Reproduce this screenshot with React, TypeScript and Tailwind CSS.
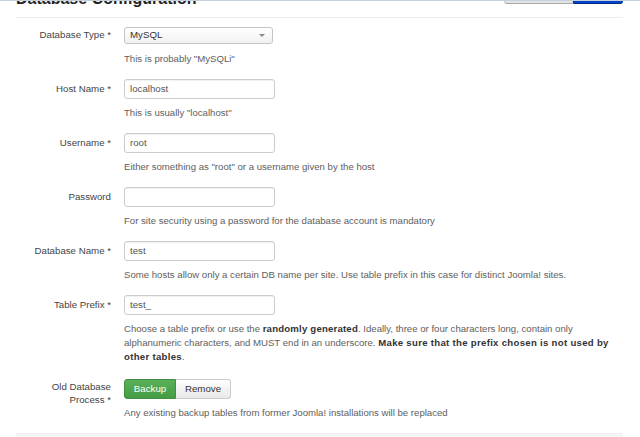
import { ReactNode } from 'react';

type RowProps = {
    label: ReactNode;
    children: ReactNode;
    help: ReactNode;
    twoLineLabel?: boolean;
    className?: string;
};

function FieldRow({ label, children, help, twoLineLabel, className }: RowProps) {
    return (
        <div className={`grid grid-cols-[95px_1fr] gap-x-[13px] mb-[13px] ${className ?? ''}`}>
            <label className={`text-right text-[#444] text-[9.7px] ${twoLineLabel ? 'leading-[13px] pt-[1px]' : 'leading-[20px]'}`}>
                {label}
            </label>
            <div>
                {children}
                <p className="mt-[7px] text-[9.6px] leading-[14px] text-[#606060] whitespace-nowrap">{help}</p>
            </div>
        </div>
    );
}

function TextInput({ value }: { value: string }) {
    return (
        <div className="w-[151px] h-[20px] border border-[#cccccc] rounded-[3px] bg-white px-[5px] text-[9.7px] leading-[18px] text-[#555] shadow-[inset_0_1px_1px_rgba(0,0,0,0.06)]">
            {value}
        </div>
    );
}

export default function App() {
    return (
        <div className="relative h-[437px] overflow-hidden bg-white font-['Liberation_Sans',Arial,sans-serif]">
            {/* navbar edge sitting over the scrolled page */}
            <div className="absolute top-0 inset-x-0 h-px bg-[#c5d0da] z-10"></div>

            <div className="ml-4 w-[607px]">
                <div className="-mt-[11px] flex justify-between items-start border-b border-[#eeeeee] pb-[8px]">
                    <h3 className="text-[16px] leading-[20px] font-bold text-[#222]">Database Configuration</h3>
                    <div className="-mt-[9px] flex h-[24px]">
                        <button className="w-[69px] h-full rounded-l-[3px] bg-gradient-to-b from-white to-[#e2e2e2] border border-[#c8c8c8] border-b-[#a8a8a8]"></button>
                        <button className="w-[50px] h-full rounded-r-[3px] bg-[#0044cc] border border-[#0037a8] border-b-[#002a80]"></button>
                    </div>
                </div>

                <div className="pt-[7px]">
                    <FieldRow label="Database Type *" help={'This is probably "MySQLi"'}>
                        <div className="h-[20px] pt-[2px]">
                            <div className="w-[149px] h-[17px] border border-[#c4c4c4] rounded-[3px] bg-gradient-to-b from-white to-[#f1f1f1] px-[5px] flex items-center justify-between text-[9.7px] text-[#333]">
                                <span>MySQL</span>
                                <svg width="6" height="3" viewBox="0 0 6 3" className="mr-[2px]">
                                    <path d="M0 0h6L3 3z" fill="#888" />
                                </svg>
                            </div>
                        </div>
                    </FieldRow>

                    <FieldRow label="Host Name *" help={'This is usually "localhost"'}>
                        <TextInput value="localhost" />
                    </FieldRow>

                    <FieldRow label="Username *" help={'Either something as "root" or a username given by the host'}>
                        <TextInput value="root" />
                    </FieldRow>

                    <FieldRow label="Password" help="For site security using a password for the database account is mandatory">
                        <TextInput value="" />
                    </FieldRow>

                    <FieldRow label="Database Name *" help="Some hosts allow only a certain DB name per site. Use table prefix in this case for distinct Joomla! sites.">
                        <TextInput value="test" />
                    </FieldRow>

                    <FieldRow
                        label="Table Prefix *"
                        help={
                            <>
                                Choose a table prefix or use the <b className="text-[#333] tracking-[0.2px]">randomly generated</b>. Ideally, three or four characters long, contain only
                                <br />
                                alphanumeric characters, and MUST end in an underscore. <b className="text-[#333] tracking-[0.3px]">Make sure that the prefix chosen is not used by</b>
                                <br />
                                <b className="text-[#333] tracking-[0.3px]">other tables</b>.
                            </>
                        }
                        className="mb-[15px]"
                    >
                        <TextInput value="test_" />
                    </FieldRow>

                    <FieldRow
                        twoLineLabel
                        label={
                            <>
                                Old Database
                                <br />
                                Process *
                            </>
                        }
                        help="Any existing backup tables from former Joomla! installations will be replaced"
                        className="mb-[12px]"
                    >
                        <div className="flex h-[20px] text-[9.7px]">
                            <button className="w-[52px] h-full rounded-l-[3px] bg-gradient-to-b from-[#58b058] to-[#449c44] border border-[#3f8f3f] text-white">
                                Backup
                            </button>
                            <button className="w-[55px] h-full rounded-r-[3px] bg-gradient-to-b from-white to-[#e8e8e8] border border-l-0 border-[#cccccc] text-[#333]">
                                Remove
                            </button>
                        </div>
                    </FieldRow>
                </div>

                <div className="h-[10px] bg-[#f5f5f5] border-t border-[#eeeeee]"></div>
            </div>
        </div>
    );
}
